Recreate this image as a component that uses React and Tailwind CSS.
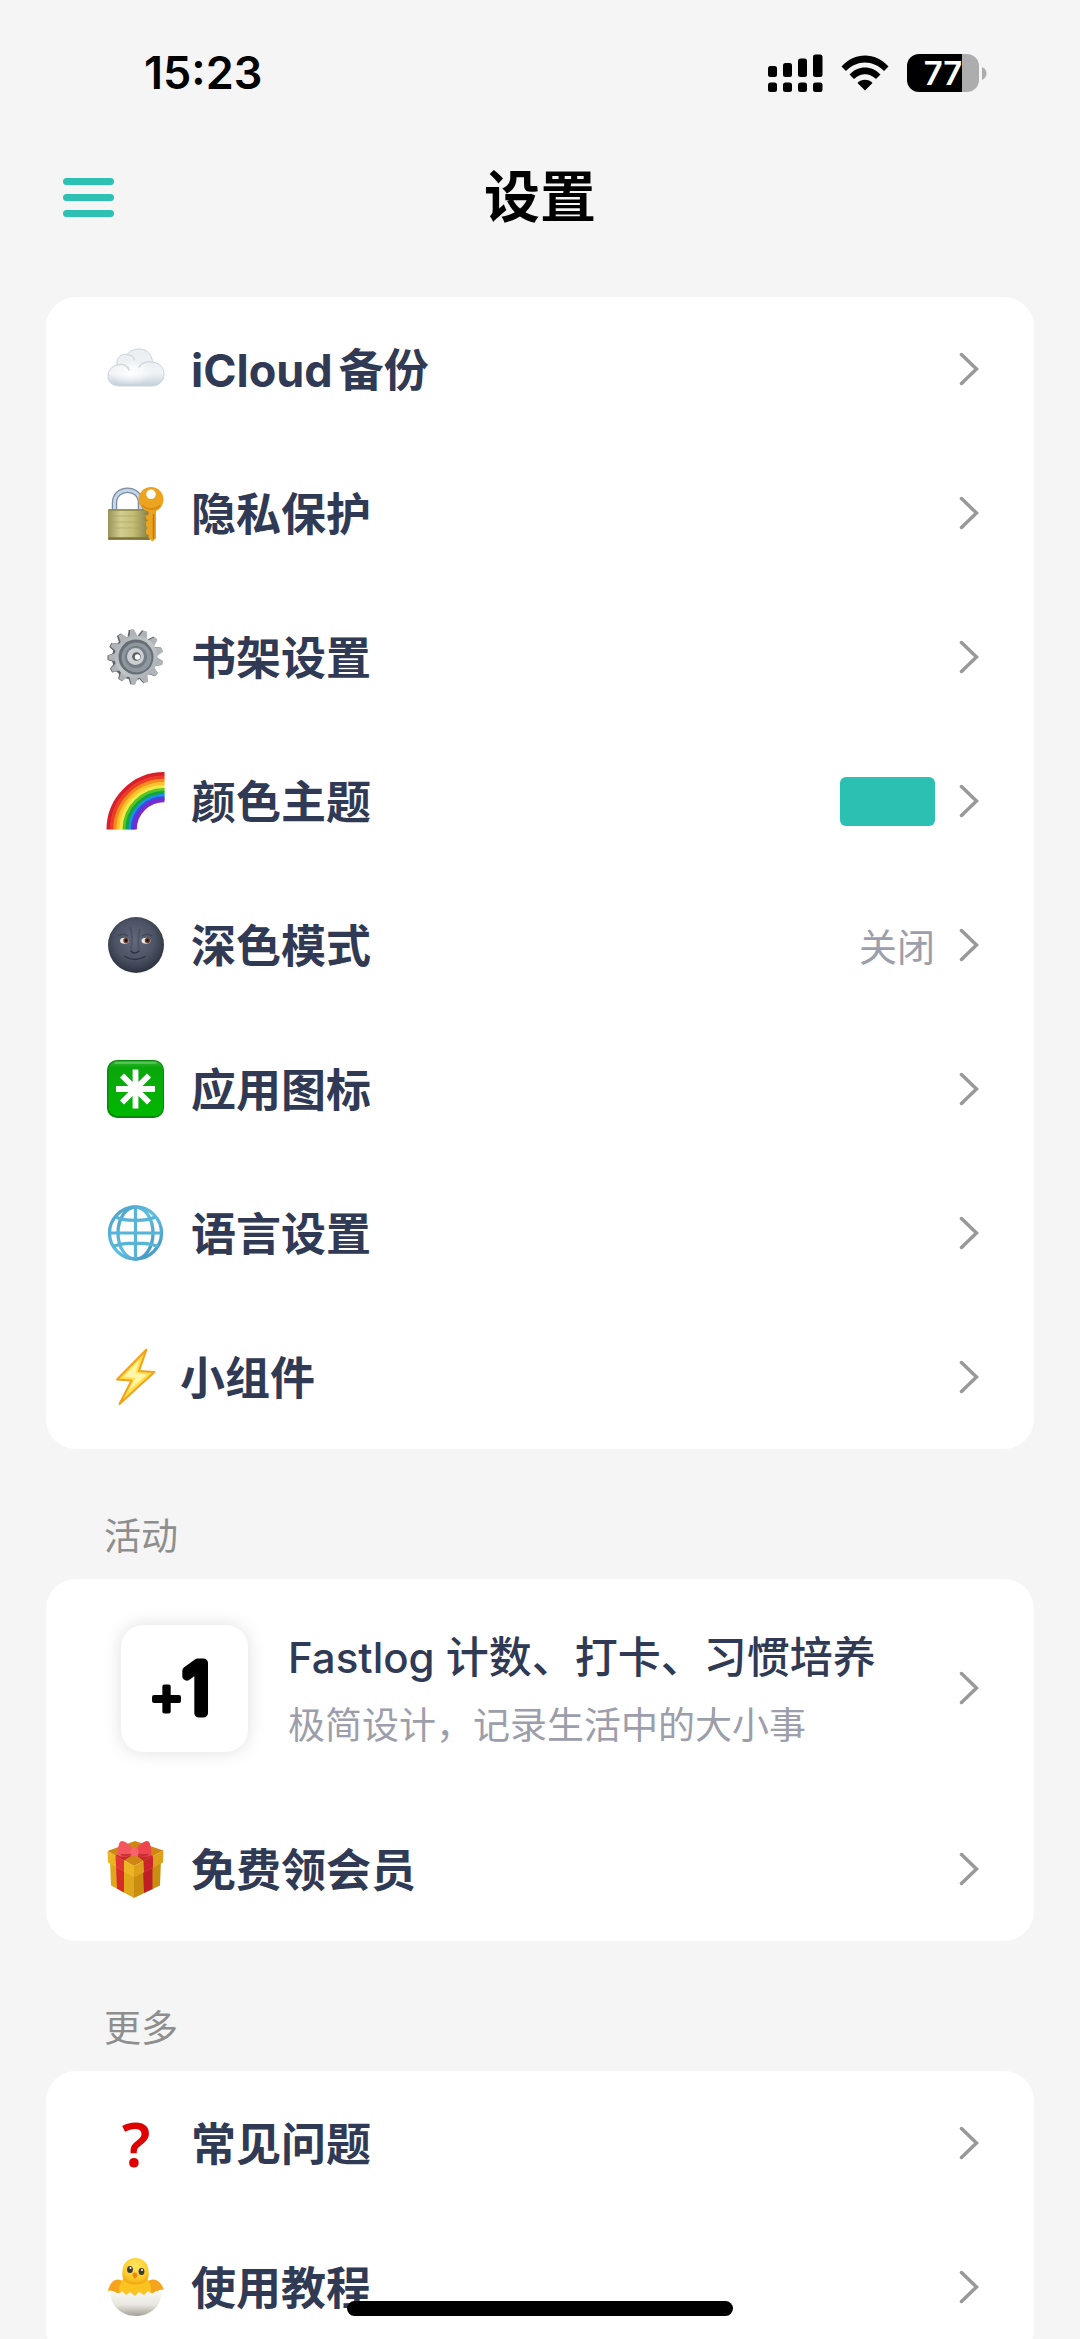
import React from "react";

function CloudIcon() {
  return (
    <svg viewBox="0 0 60 60" className="size-[60px]" aria-hidden="true">
      <defs>
        <linearGradient id="cloudFill" x1="0" y1="0" x2="0" y2="1">
          <stop offset="0" stopColor="#eceff2" />
          <stop offset="0.65" stopColor="#f0f3f6" />
          <stop offset="1" stopColor="#c3cfda" />
        </linearGradient>
        <radialGradient id="cloudLight" cx="0.45" cy="0.5" r="0.5">
          <stop offset="0" stopColor="#ffffff" />
          <stop offset="1" stopColor="#ffffff" stopOpacity="0" />
        </radialGradient>
      </defs>
      <path
        d="M14 47C6 47 2 42.500 2 37C2 31.500 6 27 11 26C10 19 15 14.500 21 15.500C24 11.500 28.500 10 33 10C40.500 10 46 15 46.500 23C53 24 58 28 58 35C58 42.500 52.500 47 46 47Z"
        fill="url(#cloudFill)"
        stroke="#ccd3da"
        strokeWidth="1"
      />
      <ellipse cx="27" cy="34" rx="22" ry="12" fill="url(#cloudLight)" />
      <path d="M11 26C17 24 22 27 23 31M21 15.500C25 16 28 18 28.500 21M33 28C36 23 42 22 47 23.500" fill="none" stroke="#d3d8de" strokeWidth="1.500" strokeLinecap="round" />
    </svg>
  );
}

function LockIcon() {
  return (
    <svg viewBox="0 0 60 60" className="size-[60px]" aria-hidden="true">
      <defs>
        <linearGradient id="lockBody" x1="0" y1="0" x2="1" y2="0">
          <stop offset="0" stopColor="#99935a" />
          <stop offset="0.3" stopColor="#d3cd90" />
          <stop offset="0.6" stopColor="#c3bd76" />
          <stop offset="1" stopColor="#837b3f" />
        </linearGradient>
      </defs>
      <path d="M8.500 28V20C8.500 3 34.500 3 34.500 20V28" fill="none" stroke="#7b8b9f" strokeWidth="5.500" />
      <path d="M8.500 28V20C8.500 3 34.500 3 34.500 20V28" fill="none" stroke="#c3d5ea" strokeWidth="3" />
      <rect x="2" y="26" width="42" height="31" rx="1.500" fill="url(#lockBody)" />
      <path d="M2 33H44M2 39H44M2 45H44" stroke="#a8a25c" strokeWidth="1.200" opacity="0.6" />
      <path d="M2.500 27H44" stroke="#8c864a" strokeWidth="1.500" />
      <path d="M2.500 55.500H44" stroke="#7d7638" strokeWidth="2.500" />
      <path
        fillRule="evenodd"
        d="M45 4C52 4 57.500 9.500 57.500 16.500C57.500 22 54 26.500 50 28V55L46.500 58.500L42.500 55V52L40 50.500V46.500L42 45L40 43V39L42 37.500L40 35.500V33L42.500 31.500V28.500C36.500 27 32.500 22 32.500 16.500C32.500 9.500 38 4 45 4ZM45 6.500A4.800 4.800 0 1 0 45 16.100A4.800 4.800 0 1 0 45 6.500Z"
        fill="#eca420"
      />
      <path d="M47.500 31V56" stroke="#bd7610" strokeWidth="1.500" />
      <path d="M36 22C40 27 49 27.500 54 22.500" fill="none" stroke="#d88b12" strokeWidth="1.800" />
    </svg>
  );
}

const gearTeeth = Array.from({ length: 13 }, (_, i) => (i * 360) / 13 - 8);

function GearIcon() {
  return (
    <svg viewBox="0 0 60 60" className="size-[60px]" aria-hidden="true">
      <defs>
        <linearGradient id="gearMetal" x1="0" y1="0" x2="1" y2="1">
          <stop offset="0" stopColor="#a9aeb3" />
          <stop offset="0.5" stopColor="#c3c7ca" />
          <stop offset="1" stopColor="#a6abb0" />
        </linearGradient>
      </defs>
      <g fill="#5f646a">
        {gearTeeth.map((a) => (
          <path key={a} d="M24.500 9L26.500 2.500H31L33.500 9Z" transform={`rotate(${a} 29 30)`} />
        ))}
        <circle cx="28" cy="31" r="22" />
      </g>
      <g fill="#b0b4b8">
        {gearTeeth.map((a) => (
          <path key={a} d="M26 10L28 2.500H32L34.500 10Z" transform={`rotate(${a} 30 30)`} />
        ))}
      </g>
      <circle cx="30" cy="30" r="21.500" fill="url(#gearMetal)" />
      <circle cx="30" cy="30" r="17.500" fill="#666d75" />
      <circle cx="30.500" cy="30.500" r="15" fill="#8f979e" />
      <circle cx="30" cy="30" r="11" fill="#747c84" />
      <circle cx="29.500" cy="29.500" r="8.500" fill="#cdd0d2" />
      <circle cx="30.500" cy="29.500" r="4.300" fill="#5b6066" />
      <circle cx="31.500" cy="30" r="2.700" fill="#ffffff" />
    </svg>
  );
}

const rainbowBands = [
  [55.5, "#d8202c"],
  [52, "#ee3b24"],
  [48.7, "#f98a1c"],
  [45.500, "#fdc52c"],
  [42.500, "#f8e84a"],
  [39.500, "#4fc62a"],
  [36.500, "#12a53b"],
  [33.700, "#1f8fe8"],
  [31.300, "#3a4be0"],
  [29.200, "#7a2bd0"],
];

function RainbowIcon() {
  return (
    <svg viewBox="0 0 60 60" className="size-[60px]" aria-hidden="true">
      <g fill="none" strokeWidth="4">
        {rainbowBands.map(([r, c]) => (
          <path key={c} d={`M${58 - r} 58.500A${r} ${r} 0 0 1 58.500 ${58.5 - r}`} stroke={c} />
        ))}
      </g>
    </svg>
  );
}

function MoonIcon() {
  return (
    <svg viewBox="0 0 60 60" className="size-[60px]" aria-hidden="true">
      <defs>
        <radialGradient id="moonFill" cx="0.48" cy="0.42" r="0.55">
          <stop offset="0" stopColor="#626a7c" />
          <stop offset="0.65" stopColor="#4b5364" />
          <stop offset="1" stopColor="#303644" />
        </radialGradient>
      </defs>
      <circle cx="30" cy="30" r="28" fill="url(#moonFill)" />
      <path d="M24 12C26 18 26.500 26 25 34M34 14C31.500 22 32 28 33 34" fill="none" stroke="#3f4658" strokeWidth="2" opacity="0.5" />
      <path d="M12 21C15 19 19 19 22 21M36 21C39 19 43 19 46 21" fill="none" stroke="#3b4252" strokeWidth="1.500" opacity="0.7" />
      <ellipse cx="18.500" cy="25.800" rx="4.500" ry="3" fill="#eae6e4" />
      <ellipse cx="40" cy="25.800" rx="4.500" ry="3" fill="#eae6e4" />
      <circle cx="20" cy="25.500" r="2.700" fill="#6b3c2c" />
      <circle cx="41.500" cy="25.500" r="2.700" fill="#6b3c2c" />
      <circle cx="20" cy="25.500" r="1.300" fill="#150d0c" />
      <circle cx="41.500" cy="25.500" r="1.300" fill="#150d0c" />
      <path d="M25 36C26.500 38.500 31 38.500 33 36" fill="none" stroke="#2e3442" strokeWidth="1.500" strokeLinecap="round" />
      <path d="M19 41.500C25 45.500 33 45.500 39 41.500" fill="none" stroke="#2e3442" strokeWidth="1.500" strokeLinecap="round" />
    </svg>
  );
}

function AsteriskIcon() {
  return (
    <svg viewBox="0 0 60 60" className="size-[60px]" aria-hidden="true">
      <defs>
        <linearGradient id="keyGreen" x1="0" y1="0" x2="0" y2="1">
          <stop offset="0" stopColor="#35b535" />
          <stop offset="0.12" stopColor="#0aa60d" />
          <stop offset="1" stopColor="#00b800" />
        </linearGradient>
      </defs>
      <rect x="1" y="1" width="57" height="58" rx="10" fill="#078a0b" />
      <rect x="2.500" y="2" width="54.500" height="55" rx="9" fill="url(#keyGreen)" />
      <path d="M9 4H50" stroke="#7fd07f" strokeWidth="1" strokeLinecap="round" />
      <path d="M29.500 10.500V49.500M10 30H49M16 16.500L43 43.500M43 16.500L16 43.500" stroke="#ffffff" strokeWidth="5.800" />
      <circle cx="29.500" cy="30" r="7.500" fill="#ffffff" />
    </svg>
  );
}

function GlobeIcon() {
  return (
    <svg viewBox="0 0 60 60" className="size-[60px]" aria-hidden="true">
      <defs>
        <linearGradient id="globeLine" x1="0" y1="0" x2="1" y2="1">
          <stop offset="0" stopColor="#4b9fc8" />
          <stop offset="0.5" stopColor="#62bfe0" />
          <stop offset="1" stopColor="#3c8fbc" />
        </linearGradient>
      </defs>
      <circle cx="29.500" cy="30" r="26.500" fill="#fbfdff" />
      <g fill="none" stroke="url(#globeLine)" strokeWidth="3.300">
        <circle cx="29.500" cy="30" r="26" />
        <ellipse cx="29.500" cy="30" rx="17.500" ry="26" />
      </g>
      <path d="M29.500 4V56M3.500 30H55.500M10 14C18 18.500 41 18.500 49 14M7 43.500C18 39 41 39 52 43.500" fill="none" stroke="#58b3d8" strokeWidth="3.200" />
    </svg>
  );
}

function BoltIcon() {
  return (
    <svg viewBox="0 0 60 60" className="size-[60px]" aria-hidden="true">
      <path d="M40.500 2.500L11 32.500L25.500 33.500L13.500 57L48.500 25L33 24Z" fill="#ffe14d" stroke="#f5a01c" strokeWidth="2" strokeLinejoin="round" />
      <path d="M33 13L18 29.500L29.500 31L23 43L41 27.500L29.500 26Z" fill="#fff6a8" />
    </svg>
  );
}

function GiftIcon() {
  return (
    <svg viewBox="0 0 60 60" className="size-[60px]" aria-hidden="true">
      <path d="M4 20L28 33V59L5 46.500Z" fill="#e0a61c" />
      <path d="M55 20L28 33V59L54 46.500Z" fill="#c98e10" />
      <path d="M10 27L18 31V53.500L11 49.500Z" fill="#d92a2a" />
      <path d="M37 31L46.500 27V50L38 54Z" fill="#bd1f24" />
      <path d="M1.500 12L29 2L57.500 11.500L28 27Z" fill="#cf8614" />
      <path d="M1.500 12L28 27V38.500L2 23.500Z" fill="#ecb524" />
      <path d="M57.500 11.500L28 27V38.500L57 23.500Z" fill="#dda01a" />
      <path d="M9.500 16.500L18 21.500V33L10 28Z" fill="#e23435" />
      <path d="M37.500 22L47 17V28.500L38 33.500Z" fill="#c9252a" />
      <path d="M9.500 16.500L21 12L28 15L18 21.500ZM29 15L35 12L47 17L37.500 22Z" fill="#c9282c" />
      <path d="M28 12C23 4 16 0 14 3C12 6 11 14 12.500 17C16 18 24 18 28 15Z" fill="#f4565d" />
      <path d="M29 12C34 4 41 0 43 3C45 6 46 14 44.500 17C41 18 33 18 29 15Z" fill="#ee464f" />
      <path d="M15 15.500C19 16.500 24 16 27 14.500M42 15.500C38 16.500 33 16 30 14.500" fill="none" stroke="#c22c35" strokeWidth="1.800" />
      <rect x="24.500" y="9" width="8" height="8.500" rx="3" fill="#f7656b" />
    </svg>
  );
}

function QuestionIcon() {
  return (
    <span
      aria-hidden="true"
      className="flex w-[60px] justify-center font-['Noto_Sans',sans-serif] text-[62px] leading-[86px] font-semibold text-[#e00000]"
    >
      ?
    </span>
  );
}

function ChickIcon() {
  return (
    <svg viewBox="0 0 60 60" className="size-[60px]" aria-hidden="true">
      <defs>
        <linearGradient id="eggShell" x1="0" y1="0" x2="0" y2="1">
          <stop offset="0" stopColor="#f8f7f2" />
          <stop offset="0.55" stopColor="#e8e7e0" />
          <stop offset="1" stopColor="#a3a197" />
        </linearGradient>
        <radialGradient id="chickHead" cx="0.5" cy="0.3" r="0.7">
          <stop offset="0" stopColor="#ffe664" />
          <stop offset="0.7" stopColor="#fccb27" />
          <stop offset="1" stopColor="#f1a714" />
        </radialGradient>
      </defs>
      <path d="M18 25C11 19 4 24 2 34C6 32 9 36 12 36L24 37Z" fill="#f5a41c" />
      <path d="M40 25C48 19 55 24 58 33C54 31 51 36 47 36L36 37Z" fill="#f5a41c" />
      <path d="M17 22H41C47 28 46 40 40 44H18C11 39 12 28 17 22Z" fill="#fac321" />
      <path d="M29.500 1C37.500 1 42.500 7 42.500 14C44 23 39 27.500 29.500 27.500C20 27.500 15 23 16.500 14C16.500 7 21.500 1 29.500 1Z" fill="url(#chickHead)" />
      <ellipse cx="24" cy="12.500" rx="2.900" ry="3.500" fill="#3a3b31" />
      <ellipse cx="35.500" cy="14.500" rx="2.900" ry="3.500" fill="#3a3b31" />
      <circle cx="24.500" cy="11" r="1" fill="#ffffff" />
      <circle cx="36" cy="13" r="1" fill="#ffffff" />
      <path d="M28.500 15.500C32 15.500 32.500 19 29 22C25.500 19 26 15.500 28.500 15.500Z" fill="#ee8612" />
      <path d="M4.500 34L9 35L12 38L16 34L20 38L24 35L29 39L33 35L38 38L42 34L46 37L50 34L55 35C56 49 44 59 30 59C15 59 3.500 48 4.500 34Z" fill="url(#eggShell)" />
    </svg>
  );
}

function Chevron() {
  return (
    <svg viewBox="0 0 20 34" className="h-[34px] w-5 shrink-0" aria-hidden="true">
      <path d="M2.500 2.500L17.500 17L2.500 31.500" fill="none" stroke="#999999" strokeWidth="3.500" strokeLinecap="round" />
    </svg>
  );
}

function Row({ icon, label, tight = false, children }) {
  return (
    <li>
      <button type="button" className="flex h-36 w-full items-center pr-[55px] pl-[60px] text-left">
        {icon}
        <span className={tight ? "ml-3.5 pt-[3px] text-[45px] leading-[60px] font-bold" : "ml-[25px] pt-[3px] text-[45px] leading-[60px] font-bold"}>
          {label}
        </span>
        <span className="ml-auto flex items-center gap-6">
          {children}
          <Chevron />
        </span>
      </button>
    </li>
  );
}

function Card({ children }) {
  return <ul className="mx-[46px] rounded-[30px] bg-white text-[#303a55]">{children}</ul>;
}

function SectionLabel({ children }) {
  return <h2 className="h-[130px] pt-[62px] pl-[104px] text-[37px] leading-[52px] font-normal text-[#8e8e8e]">{children}</h2>;
}

function StatusBar() {
  return (
    <div className="flex h-[146px] shrink-0 items-center justify-between pr-[93px] pl-36 text-black">
      <time className="font-['Inter',sans-serif] text-[45px] leading-[60px] font-semibold">15:23</time>
      <div className="flex items-center gap-[18px]">
        <svg viewBox="0 0 55 38" className="h-[38px] w-[55px]" role="img" aria-label="信号">
          <rect x="0" y="12" width="9" height="11" rx="2.500" />
          <rect x="15" y="9" width="9" height="14" rx="2.500" />
          <rect x="30" y="4.500" width="9" height="18.500" rx="2.500" />
          <rect x="45" y="0.500" width="9.500" height="22.500" rx="2.500" />
          <rect x="0" y="28.500" width="9" height="9.500" rx="2.500" />
          <rect x="15" y="28.500" width="9" height="9.500" rx="2.500" />
          <rect x="30" y="28.500" width="9" height="9.500" rx="2.500" />
          <rect x="45" y="28.500" width="9.500" height="9.500" rx="2.500" />
        </svg>
        <svg viewBox="0 0 48 38" className="h-[38px] w-12" role="img" aria-label="Wi-Fi">
          <path d="M0.500 12.500C13.500 -2.200 34.500 -2.200 47.500 12.500L43 17C32 5.500 16 5.500 5 17Z" />
          <path d="M8.500 20.500C17 11 31 11 39.500 20.500L35 25C28.500 18.500 19.500 18.500 13 25Z" />
          <path d="M16.500 29C20.500 24.700 27.500 24.700 31.500 29L24 36.500Z" />
        </svg>
        <div className="flex items-center gap-[3px]">
          <span className="flex h-[38px] w-[72px] items-center justify-center rounded-xl bg-[linear-gradient(to_right,#000000_55px,#adadad_55px)] font-['Inter',sans-serif] text-[33px] leading-[38px] font-semibold text-white">
            77
          </span>
          <svg viewBox="0 0 5 13" className="h-[13px] w-[5px]" aria-hidden="true">
            <path d="M0 0C6 2.500 6 10.500 0 13Z" fill="#adadad" />
          </svg>
        </div>
      </div>
    </div>
  );
}

function FastlogRow() {
  return (
    <li>
      <button type="button" className="flex h-[218px] w-full items-center pr-[55px] pl-[75px] text-left">
        <span className="flex size-[127px] shrink-0 rounded-[22px] bg-white shadow-[0_0_18px_rgba(0,0,0,0.13)]">
          <svg viewBox="0 0 127 127" className="size-[127px]" role="img" aria-label="+1" stroke="#000000" strokeLinejoin="round">
            <text x="28" y="89" strokeWidth="4" className="font-['Inter',sans-serif] text-[53px] font-normal">
              +
            </text>
            <text x="62" y="88" strokeWidth="9" className="font-['Inter',sans-serif] text-[69px] font-light">
              1
            </text>
          </svg>
        </span>
        <span className="ml-10 flex flex-col gap-2 pt-1.5">
          <span className="text-[43px] leading-[60px] font-medium">
            <span className="text-[42px]">Fastlog </span>计数、打卡、习惯培养
          </span>
          <span className="text-[37px] leading-[60px] text-[#9c9eab]">极简设计，记录生活中的大小事</span>
        </span>
        <span className="ml-auto">
          <Chevron />
        </span>
      </button>
    </li>
  );
}

export default function App() {
  return (
    <div
      lang="zh-CN"
      className="relative flex h-screen flex-col overflow-hidden bg-[#f5f5f5] font-['Inter','Noto_Sans_CJK_SC',sans-serif]"
    >
      <StatusBar />
      <header className="grid h-[102px] shrink-0 grid-cols-[1fr_auto_1fr] items-center px-[63px]">
        <button type="button" aria-label="菜单" className="flex w-[51px] flex-col gap-[9px]">
          <span className="h-[7px] rounded-full bg-[#2dc1b3]" />
          <span className="h-[7px] rounded-full bg-[#2dc1b3]" />
          <span className="h-[7px] rounded-full bg-[#2dc1b3]" />
        </button>
        <h1 className="text-[56px] leading-[80px] font-bold text-black">设置</h1>
      </header>
      <main className="mt-[49px] min-h-0 flex-1 overflow-y-auto [scrollbar-width:none]">
        <Card>
          <Row
            icon={<CloudIcon />}
            label={
              <>
                <span className="mr-1.5">iCloud</span>备份
              </>
            }
          />
          <Row icon={<LockIcon />} label="隐私保护" />
          <Row icon={<GearIcon />} label="书架设置" />
          <Row icon={<RainbowIcon />} label="颜色主题">
            <span className="h-[49px] w-[95px] rounded-md bg-[#2bc0b2]" />
          </Row>
          <Row icon={<MoonIcon />} label="深色模式">
            <span className="pt-[3px] text-[38px] leading-[60px] font-normal text-[#9c9eab]">关闭</span>
          </Row>
          <Row icon={<AsteriskIcon />} label="应用图标" />
          <Row icon={<GlobeIcon />} label="语言设置" />
          <Row icon={<BoltIcon />} label="小组件" tight />
        </Card>
        <SectionLabel>活动</SectionLabel>
        <Card>
          <FastlogRow />
          <Row icon={<GiftIcon />} label="免费领会员" />
        </Card>
        <SectionLabel>更多</SectionLabel>
        <Card>
          <Row icon={<QuestionIcon />} label="常见问题" />
          <Row icon={<ChickIcon />} label="使用教程" />
        </Card>
      </main>
      <div className="absolute inset-x-0 bottom-[23px] mx-auto h-[15px] w-[386px] rounded-full bg-black" />
    </div>
  );
}
